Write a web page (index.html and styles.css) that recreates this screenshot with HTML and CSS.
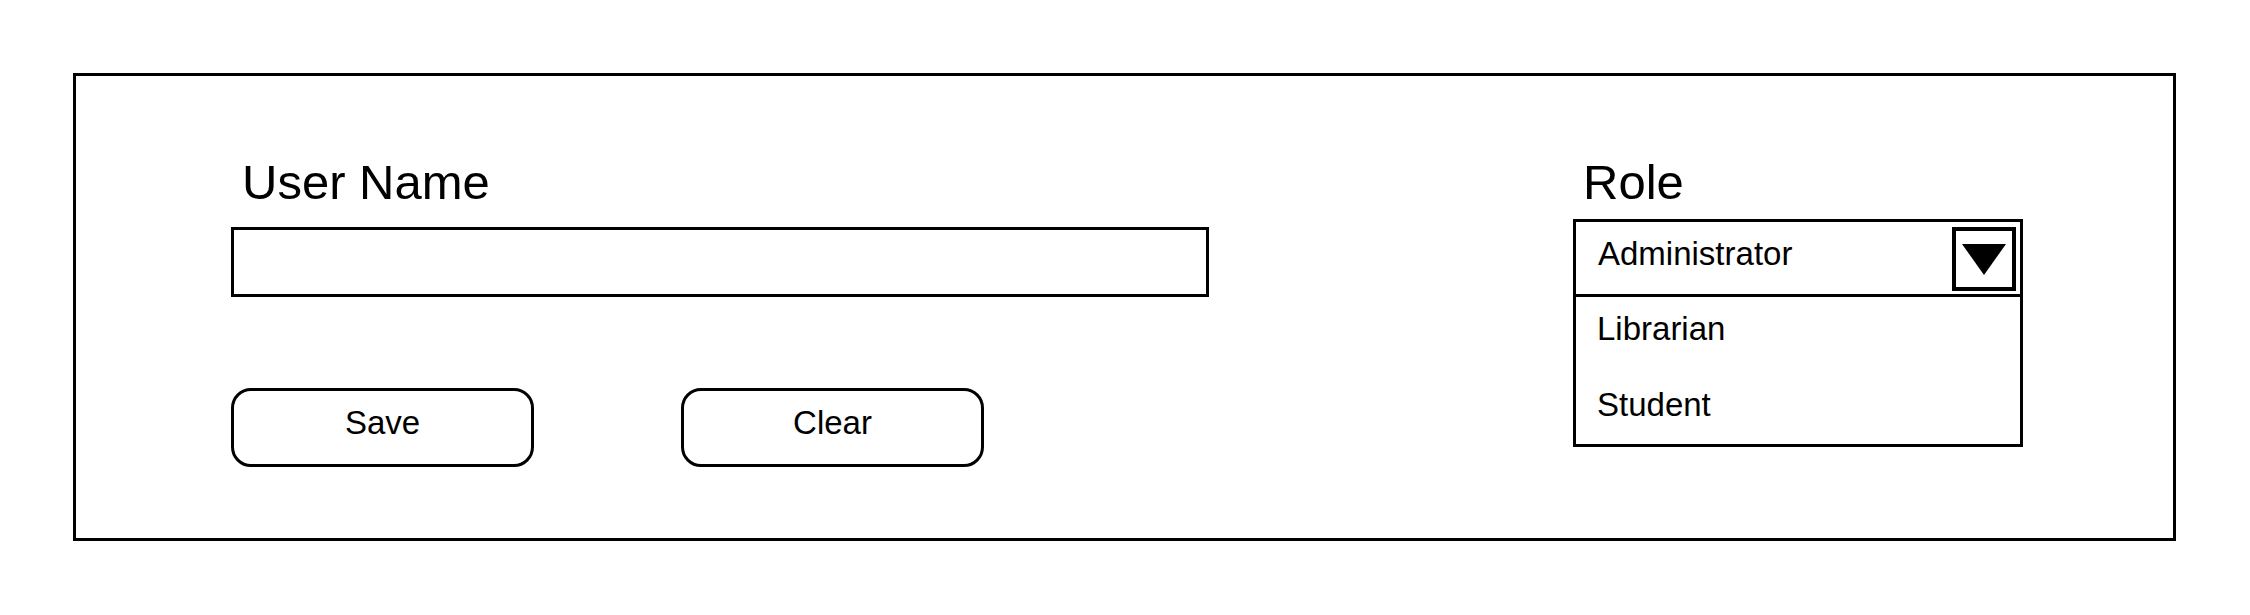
FILE: index.html
```html
<!DOCTYPE html>
<html lang="en">
<head>
    <meta charset="UTF-8">
    <title>User Role</title>
    <link rel="stylesheet" href="styles.css">
</head>
<body>
    <div class="panel">
        <div class="user-col">
            <div class="label user-label">User Name</div>
            <div class="text-input"></div>
            <div class="buttons">
                <div class="btn">Save</div>
                <div class="btn">Clear</div>
            </div>
        </div>

        <div class="role-col">
            <div class="label role-label">Role</div>
            <div class="dropdown">
                <div class="dropdown-head">
                    <span class="selected">Administrator</span>
                    <div class="arrow-box">
                        <svg width="44" height="31" viewBox="0 0 44 31">
                            <polygon points="0,0 44,0 22,31" fill="#000"/>
                        </svg>
                    </div>
                </div>
                <div class="dropdown-list">
                    <div class="option">Librarian</div>
                    <div class="option">Student</div>
                </div>
            </div>
        </div>
    </div>
</body>
</html>
```

FILE: styles.css
```css
* {
    margin: 0;
    padding: 0;
    box-sizing: border-box;
    font-family: 'Liberation Sans', Arial, sans-serif;
}

body {
    background: #fff;
    color: #000;
}

.panel {
    display: flex;
    align-items: flex-start;
    margin: 73px 0 0 73px;
    width: 2103px;
    height: 468px;
    border: 3px solid #000;
    padding: 78px 0 0 155px;
}

.label {
    font-size: 49px;
    line-height: 56px;
}

.user-label {
    padding-left: 11px;
    margin-bottom: 17px;
}

.text-input {
    width: 978px;
    height: 70px;
    border: 3px solid #000;
}

.buttons {
    display: flex;
    gap: 147px;
    margin-top: 91px;
}

.btn {
    width: 303px;
    height: 79px;
    border: 3px solid #000;
    border-radius: 20px;
    display: flex;
    align-items: center;
    justify-content: center;
    padding-bottom: 10px;
    font-size: 33px;
}

.role-col {
    margin-left: 364px;
}

.role-label {
    padding-left: 10px;
    margin-bottom: 9px;
}

.dropdown {
    width: 450px;
    height: 228px;
    border: 3px solid #000;
    font-size: 33px;
}

.dropdown-head {
    display: flex;
    justify-content: space-between;
    align-items: flex-start;
    height: 75px;
    padding: 5px 4px 0 22px;
    border-bottom: 3px solid #000;
}

.selected {
    margin-top: 8px;
    line-height: 38px;
}

.arrow-box {
    width: 64px;
    height: 64px;
    border: 4px solid #000;
    display: flex;
    align-items: center;
    justify-content: center;
}

.arrow-box svg {
    display: block;
}

.dropdown-list {
    display: flex;
    flex-direction: column;
    gap: 12px;
    padding-left: 21px;
}

.option {
    line-height: 64px;
}
```
